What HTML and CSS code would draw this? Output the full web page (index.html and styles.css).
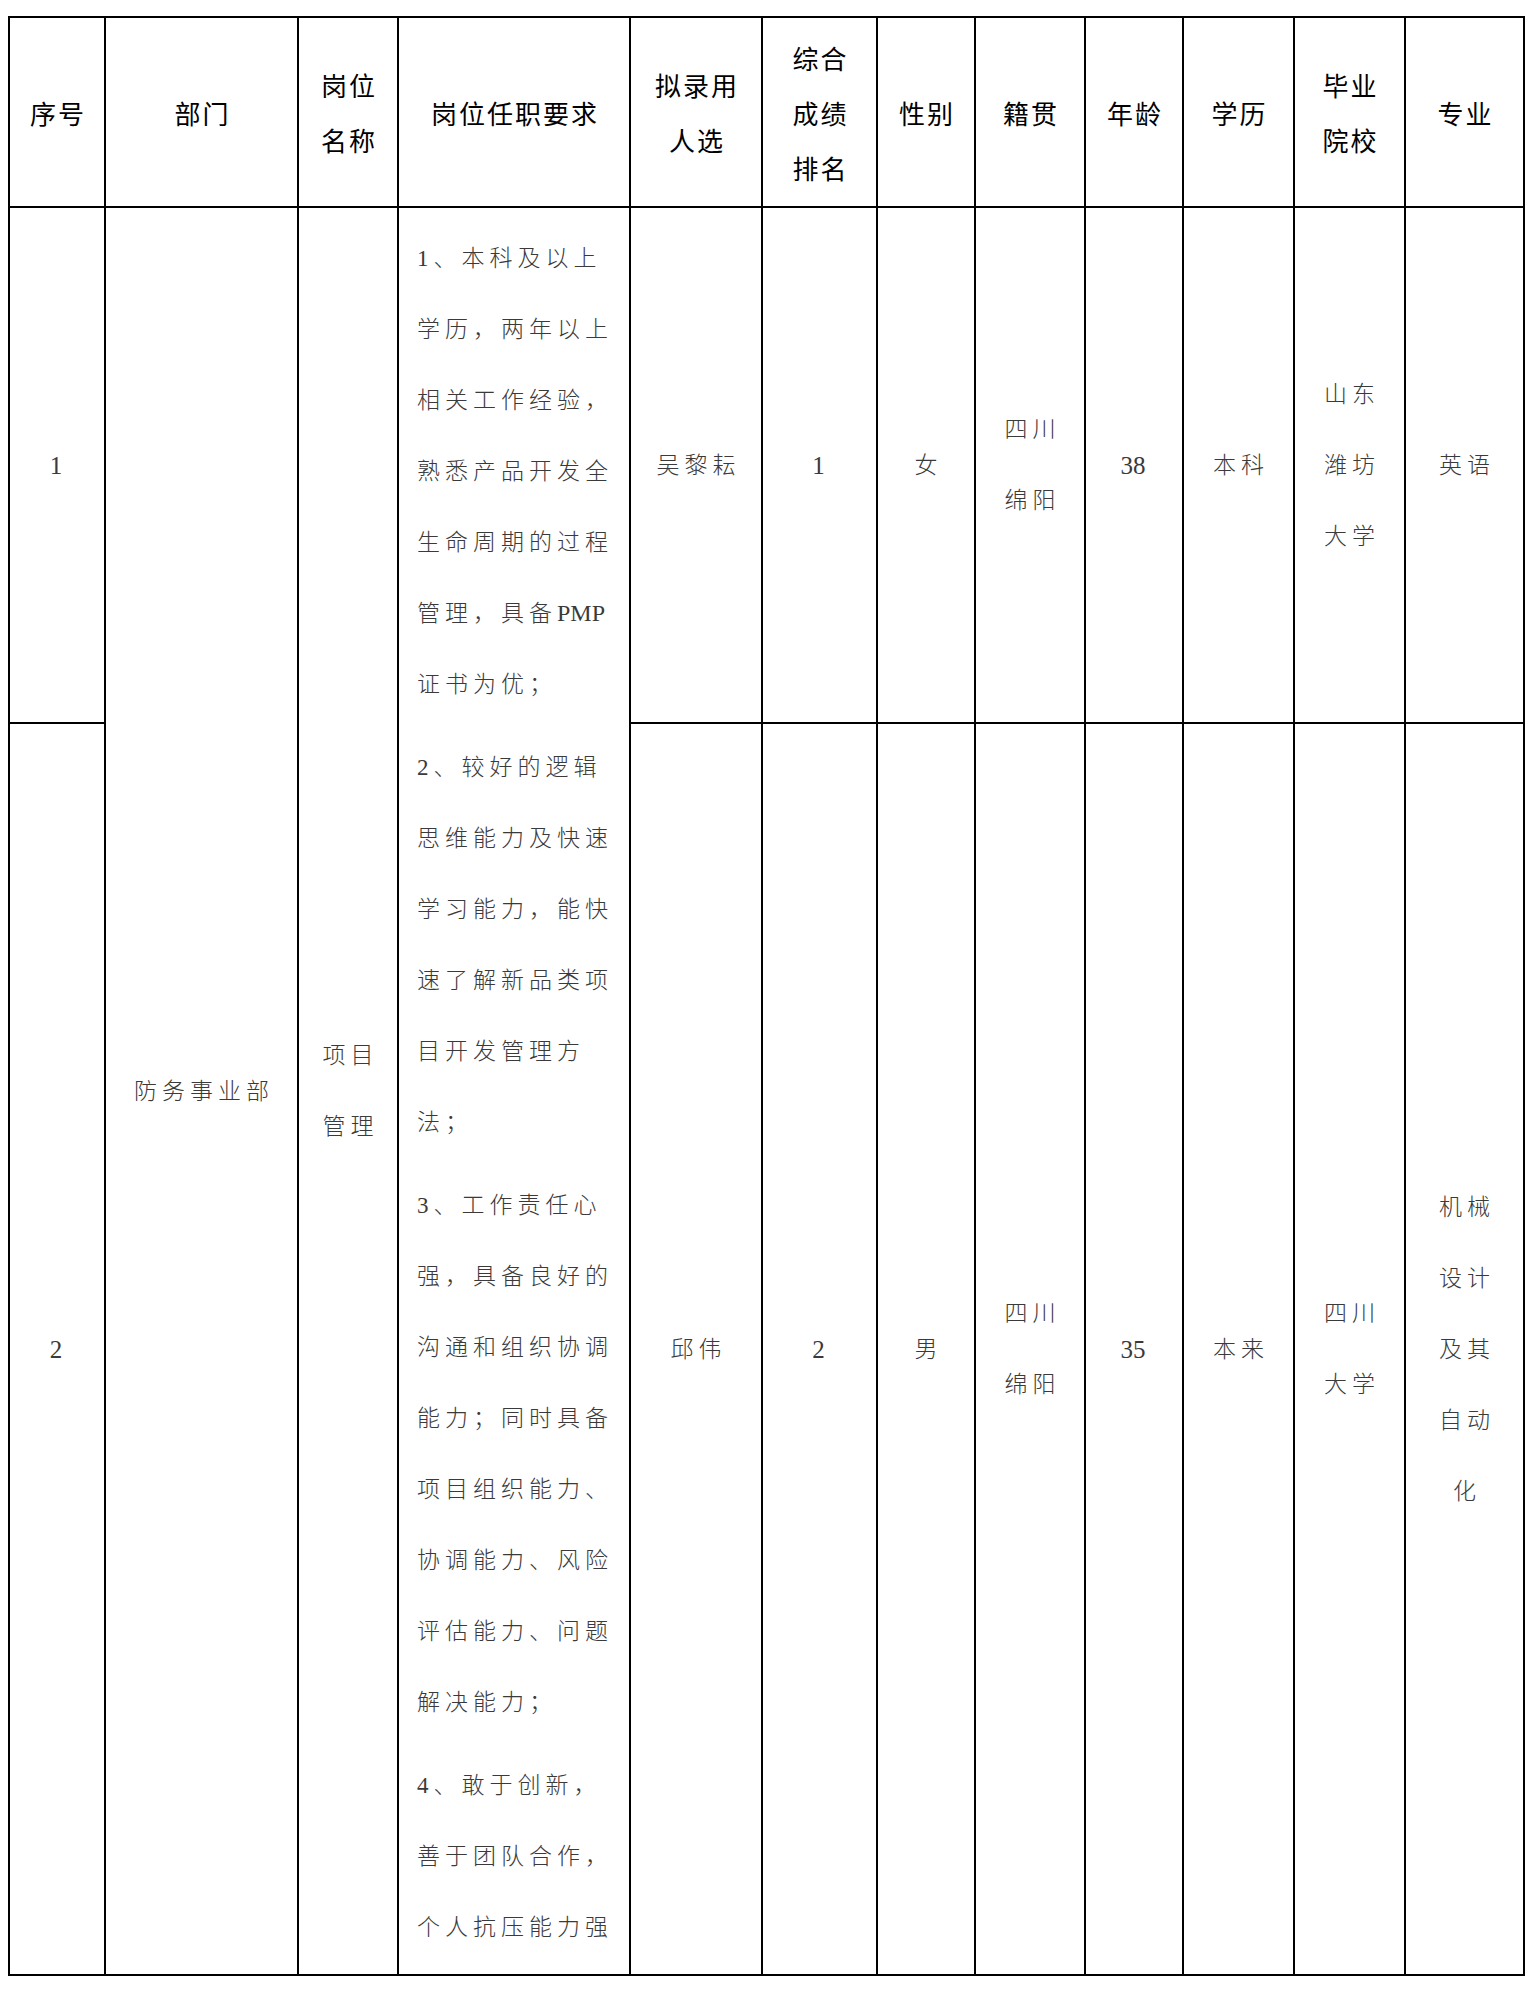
FILE: index.html
```html
<!DOCTYPE html>
<html lang="zh-CN">
<head>
<meta charset="utf-8">
<title>拟录用人选公示</title>
<link rel="stylesheet" href="styles.css">
</head>
<body>
<div class="page">
  <table class="roster">
    <colgroup>
      <col class="c-no">
      <col class="c-dept">
      <col class="c-post">
      <col class="c-req">
      <col class="c-name">
      <col class="c-rank">
      <col class="c-sex">
      <col class="c-home">
      <col class="c-age">
      <col class="c-edu">
      <col class="c-school">
      <col class="c-major">
    </colgroup>
    <thead>
      <tr class="row-head">
        <th>序号</th>
        <th>部门</th>
        <th>岗位<br>名称</th>
        <th>岗位任职要求</th>
        <th>拟录用<br>人选</th>
        <th>综合<br>成绩<br>排名</th>
        <th>性别</th>
        <th>籍贯</th>
        <th>年龄</th>
        <th>学历</th>
        <th>毕业<br>院校</th>
        <th>专业</th>
      </tr>
    </thead>
    <tbody>
      <tr class="row-one">
        <td class="num">1</td>
        <td rowspan="2">防务事业部</td>
        <td rowspan="2">项目<br>管理</td>
        <td rowspan="2" class="req">
          <p>1、本科及以上<br>学历，两年以上<br>相关工作经验，<br>熟悉产品开发全<br>生命周期的过程<br>管理，具备<span class="latin">PMP</span><br>证书为优；</p>
          <p>2、较好的逻辑<br>思维能力及快速<br>学习能力，能快<br>速了解新品类项<br>目开发管理方<br>法；</p>
          <p>3、工作责任心<br>强，具备良好的<br>沟通和组织协调<br>能力；同时具备<br>项目组织能力、<br>协调能力、风险<br>评估能力、问题<br>解决能力；</p>
          <p>4、敢于创新，<br>善于团队合作，<br>个人抗压能力强</p>
        </td>
        <td>吴黎耘</td>
        <td class="num">1</td>
        <td>女</td>
        <td>四川<br>绵阳</td>
        <td class="num">38</td>
        <td>本科</td>
        <td>山东<br>潍坊<br>大学</td>
        <td>英语</td>
      </tr>
      <tr class="row-two">
        <td class="num">2</td>
        <td>邱伟</td>
        <td class="num">2</td>
        <td>男</td>
        <td>四川<br>绵阳</td>
        <td class="num">35</td>
        <td>本来</td>
        <td>四川<br>大学</td>
        <td>机械<br>设计<br>及其<br>自动<br>化</td>
      </tr>
    </tbody>
  </table>
</div>
</body>
</html>
```

FILE: styles.css
```css
html, body {
  margin: 0;
  padding: 0;
  background: #ffffff;
}

.page {
  padding: 16px 0 0 8px;
}

.roster {
  border-collapse: collapse;
  table-layout: fixed;
  width: 1515px;
  font-family: "Liberation Serif", "Noto Sans CJK SC", serif;
}

.c-no { width: 96px; }
.c-dept { width: 193px; }
.c-post { width: 100px; }
.c-req { width: 232px; }
.c-name { width: 132px; }
.c-rank { width: 115px; }
.c-sex { width: 98px; }
.c-home { width: 110px; }
.c-age { width: 98px; }
.c-edu { width: 111px; }
.c-school { width: 111px; }
.c-major { width: 119px; }

.roster th,
.roster td {
  border: 2px solid #000000;
  padding: 0;
  text-align: center;
  vertical-align: middle;
}

.roster th {
  font-family: "Noto Sans CJK SC", serif;
  font-weight: 400;
  font-size: 26px;
  line-height: 55px;
  letter-spacing: 2px;
  padding-left: 2px;
  color: #000000;
}

.roster td {
  font-size: 23px;
  line-height: 71px;
  letter-spacing: 5px;
  padding-left: 5px;
  color: #3a3a3a;
  font-weight: 300;
}

.row-head { height: 190px; }
.row-one { height: 516px; }
.row-two { height: 1252px; }

.roster td.num {
  font-size: 25px;
  letter-spacing: 0;
  padding-left: 0;
  padding-right: 2px;
  font-weight: 400;
}

.latin {
  font-size: 24px;
  letter-spacing: 0;
  font-weight: 400;
}

.roster td.req {
  text-align: left;
  vertical-align: top;
  padding: 15px 0 0 18px;
  white-space: nowrap;
}

.req p {
  margin: 0 0 12px 0;
}

.req p:last-child {
  margin-bottom: 0;
}
```
